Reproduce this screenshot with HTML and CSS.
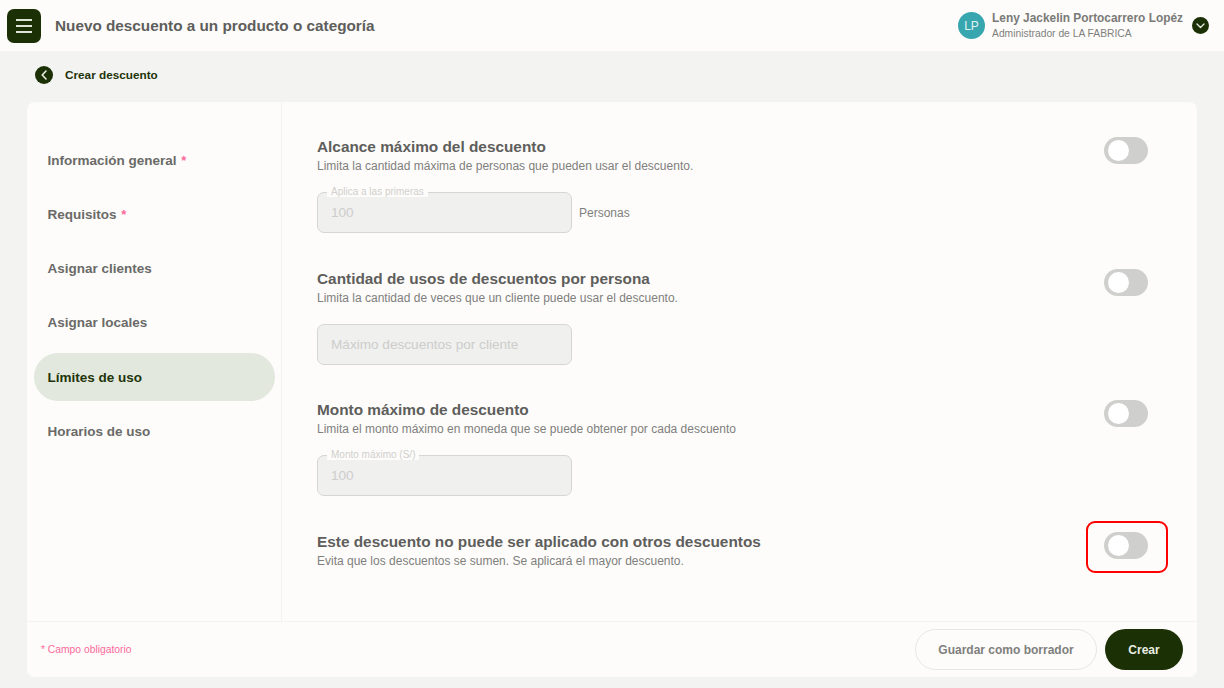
FILE: index.html
```html
<!DOCTYPE html>
<html lang="es">
<head>
<meta charset="utf-8">
<title>Nuevo descuento</title>
<link rel="stylesheet" href="styles.css">
</head>
<body>
<header class="topbar">
  <button class="menu-btn" aria-label="Menú">
    <svg width="16" height="14" viewBox="0 0 16 14"><path d="M0 1h16M0 7h16M0 13h16" stroke="#dfe5d6" stroke-width="2" fill="none"/></svg>
  </button>
  <h1 class="page-title">Nuevo descuento a un producto o categoría</h1>
  <div class="user">
    <div class="avatar">LP</div>
    <div class="user-text">
      <div class="user-name">Leny Jackelin Portocarrero Lopéz</div>
      <div class="user-role">Administrador de LA FABRICA</div>
    </div>
    <div class="user-chevron">
      <svg width="9" height="6" viewBox="0 0 9 6"><path d="M1 1l3.5 3.5L8 1" stroke="#e6eadf" stroke-width="1.4" stroke-linecap="round" stroke-linejoin="round" fill="none"/></svg>
    </div>
  </div>
</header>

<div class="backrow">
  <div class="back-btn">
    <svg width="6" height="10" viewBox="0 0 6 10"><path d="M5 1L1.2 5 5 9" stroke="#f0f2ea" stroke-width="1.5" stroke-linecap="round" stroke-linejoin="round" fill="none"/></svg>
  </div>
  <span class="back-label">Crear descuento</span>
</div>

<main class="card">
  <div class="card-body">
    <nav class="side">
      <a class="side-item">Información general <span class="req">*</span></a>
      <a class="side-item">Requisitos <span class="req">*</span></a>
      <a class="side-item">Asignar clientes</a>
      <a class="side-item">Asignar locales</a>
      <a class="side-item active">Límites de uso</a>
      <a class="side-item">Horarios de uso</a>
    </nav>
    <div class="content">
      <section class="limit">
        <div class="limit-text">
          <h2 class="limit-title">Alcance máximo del descuento</h2>
          <p class="limit-sub">Limita la cantidad máxima de personas que pueden usar el descuento.</p>
          <div class="field-row">
            <div class="field"><span class="field-label">Aplica a las primeras</span><span class="field-value">100</span></div>
            <span class="field-unit">Personas</span>
          </div>
        </div>
        <div class="toggle"><span class="knob"></span></div>
      </section>
      <section class="limit">
        <div class="limit-text">
          <h2 class="limit-title">Cantidad de usos de descuentos por persona</h2>
          <p class="limit-sub">Limita la cantidad de veces que un cliente puede usar el descuento.</p>
          <div class="field-row">
            <div class="field"><span class="field-value">Máximo descuentos por cliente</span></div>
          </div>
        </div>
        <div class="toggle"><span class="knob"></span></div>
      </section>
      <section class="limit">
        <div class="limit-text">
          <h2 class="limit-title">Monto máximo de descuento</h2>
          <p class="limit-sub">Limita el monto máximo en moneda que se puede obtener por cada descuento</p>
          <div class="field-row">
            <div class="field"><span class="field-label">Monto máximo (S/)</span><span class="field-value">100</span></div>
          </div>
        </div>
        <div class="toggle"><span class="knob"></span></div>
      </section>
      <section class="limit">
        <div class="limit-text">
          <h2 class="limit-title">Este descuento no puede ser aplicado con otros descuentos</h2>
          <p class="limit-sub">Evita que los descuentos se sumen. Se aplicará el mayor descuento.</p>
        </div>
        <div class="toggle highlighted"><span class="knob"></span></div>
      </section>
    </div>
  </div>
  <footer class="card-foot">
    <span class="foot-note">* Campo obligatorio</span>
    <div class="foot-actions">
      <button class="btn btn-ghost">Guardar como borrador</button>
      <button class="btn btn-primary">Crear</button>
    </div>
  </footer>
</main>
</body>
</html>
```
FILE: styles.css
```css
* { box-sizing: border-box; }
html, body { margin: 0; height: 100%; }
body {
  background: #f3f3f2;
  font-family: "Liberation Sans", Arial, sans-serif;
  color: #5e5e5c;
  overflow: hidden;
}
.topbar {
  height: 51px;
  background: #fdfcfa;
  display: flex;
  align-items: center;
  padding: 0 15px 0 7px;
}
.menu-btn {
  width: 34px;
  height: 34px;
  margin-top: 1px;
  border: 0;
  padding: 0;
  border-radius: 7px;
  background: #1c3005;
  display: flex;
  align-items: center;
  justify-content: center;
}
.page-title {
  margin: 1px 0 0 14px;
  font-size: 15.3px;
  font-weight: 700;
  line-height: 20px;
  color: #5e5e5c;
}
.user { margin-left: auto; display: flex; align-items: center; }
.avatar {
  width: 27px;
  height: 27px;
  border-radius: 50%;
  background: #38a6ae;
  color: #e4f3f3;
  font-size: 12px;
  display: flex;
  align-items: center;
  justify-content: center;
}
.user-text { margin-left: 7px; }
.user-name { font-size: 11.9px; font-weight: 700; line-height: 14px; color: #7a7a78; }
.user-role { font-size: 10.3px; line-height: 12px; margin-top: 3px; color: #7f7f7d; }
.user-chevron {
  width: 17px;
  height: 17px;
  margin-left: 9px;
  border-radius: 50%;
  background: #1c3005;
  display: flex;
  align-items: center;
  justify-content: center;
}
.backrow {
  height: 51px;
  padding-left: 35px;
  display: flex;
  align-items: center;
  gap: 12px;
  padding-bottom: 4px;
}
.back-btn {
  width: 18px;
  height: 18px;
  border-radius: 50%;
  background: #1c3005;
  display: flex;
  align-items: center;
  justify-content: center;
}
.back-label { font-size: 11.75px; font-weight: 700; color: #1f3409; }
.card {
  margin: 0 27px;
  height: 575px;
  background: #fdfcfa;
  border-radius: 8px;
  display: flex;
  flex-direction: column;
}
.card-body { flex: 1; display: flex; min-height: 0; }
.side {
  width: 255px;
  flex: none;
  border-right: 1px solid #f4f3f1;
  padding: 34px 6px 0 7px;
  display: flex;
  flex-direction: column;
  gap: 6.3px;
}
.side-item {
  height: 48px;
  padding-left: 13.5px;
  border-radius: 24px;
  display: flex;
  align-items: center;
  font-size: 13.5px;
  font-weight: 700;
  color: #6a6a68;
  white-space: pre;
}
.req { color: #fb6a9b; font-size: 13px; padding-left: 1px; }
.side-item.active { background: #e2e8de; color: #1f3409; }
.content {
  flex: 1;
  padding: 35px 48px 0 35px;
  display: flex;
  flex-direction: column;
  gap: 35.7px;
}
.limit { display: flex; justify-content: space-between; align-items: flex-start; }
.limit-title { margin: 0; font-size: 15.37px; font-weight: 700; line-height: 20px; color: #5e5e5c; }
.limit-sub { margin: 0; font-size: 12px; line-height: 18px; color: #7f7f7d; }
.field-row { display: flex; align-items: center; gap: 7px; margin-top: 17px; }
.field {
  position: relative;
  width: 255px;
  height: 41px;
  background: #f0f0ef;
  border: 1px solid #d6d6d4;
  border-radius: 7px;
  display: flex;
  align-items: center;
  padding-left: 13px;
}
.field-label {
  position: absolute;
  left: 9px;
  top: -7px;
  padding: 0 4px;
  background: #fdfcfa;
  font-size: 10px;
  line-height: 11px;
  color: #cfcfcd;
}
.field-value { font-size: 13.6px; color: #cdcdcb; }
.field-unit { font-size: 12px; color: #7f7f7d; }
.toggle {
  position: relative;
  width: 44px;
  height: 27px;
  margin-right: 1px;
  border-radius: 14px;
  background: #cfcfcd;
  flex: none;
}
.knob {
  position: absolute;
  left: 4px;
  top: 3px;
  width: 21px;
  height: 21px;
  border-radius: 50%;
  background: #fff;
}
.highlighted::after {
  content: "";
  position: absolute;
  left: -18px;
  right: -20px;
  top: -11px;
  bottom: -14px;
  border: 2.5px solid #f00;
  border-radius: 9px;
}
.card-foot {
  height: 56px;
  flex: none;
  border-top: 1px solid #f4f3f1;
  display: flex;
  align-items: center;
  justify-content: space-between;
  padding: 0 14px;
}
.foot-note { font-size: 10.3px; color: #fb6a9b; }
.foot-actions { display: flex; gap: 8px; }
.btn {
  height: 41px;
  border-radius: 21px;
  font-family: inherit;
  font-size: 12px;
  font-weight: 700;
}
.btn-ghost { width: 182px; background: transparent; border: 1px solid #e6e6e4; color: #7f7f7d; }
.btn-primary { width: 78px; background: #1c3005; border: 0; color: #e9ede2; }
```
